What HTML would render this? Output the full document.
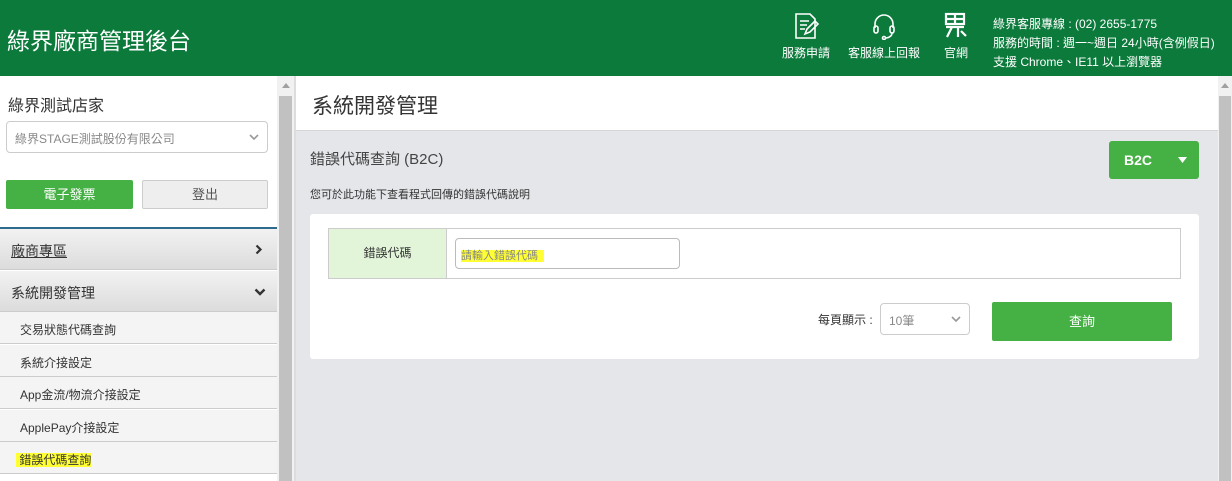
<!DOCTYPE html>
<html><head><meta charset="utf-8"><style>
*{box-sizing:border-box;margin:0;padding:0}
body{width:1232px;height:481px;overflow:hidden;background:#fff;font-family:"Liberation Sans","Noto Sans CJK TC",sans-serif;color:#333;position:relative}
.hd{position:absolute;left:0;top:0;width:1232px;height:76px;background:#0b7a3b;color:#fff}
.hd .t{position:absolute;left:7px;top:22px;font-size:23px}
.ic{position:absolute;top:12px;text-align:center;font-size:12px;width:80px}
.ic svg{display:block;margin:0 auto 4px}
.info{position:absolute;left:993px;top:15px;font-size:12px;line-height:19px}
.sb{position:absolute;left:0;top:76px;width:277px;height:405px;background:#fff}
.scr{position:absolute;top:76px;height:405px;width:17px;background:#f1f1f1}
.thumb{position:absolute;background:#c1c1c1}
.shop{position:absolute;left:8px;top:92px;font-size:16px}
.sel{position:absolute;left:6px;top:121px;width:262px;height:32px;border:1px solid #ccc;border-radius:4px;font-size:12px;color:#888;padding:8px 8px}
.chev{position:absolute}
.b1{position:absolute;left:6px;top:180px;width:127px;height:29px;background:#45b044;border-radius:2px;color:#fff;font-size:13px;text-align:center;line-height:29px}
.b2{position:absolute;left:142px;top:180px;width:126px;height:29px;background:#eee;border:1px solid #ccc;border-radius:2px;font-size:13px;text-align:center;line-height:27px;color:#555}
.line{position:absolute;left:0;top:227px;width:277px;height:2px;background:#2f6b8c}
.mh{position:absolute;left:0;width:277px;height:41px;background:linear-gradient(#f2f2f2,#dcdcdc);font-size:14px;padding:12px 11px;border-bottom:1px solid #ccc}
.si{position:absolute;left:0;width:277px;height:32px;background:#f4f4f4;border-bottom:1px solid #ccc;font-size:12px;padding:9px 20px}
.main{position:absolute;left:296px;top:76px;width:922px;height:405px;background:#e4e6e9}
.mt{position:absolute;left:0;top:0;width:922px;height:55px;background:#fff;border-bottom:1px solid #d5d5d5;font-size:21px;padding:14px 16px;color:#333}
.card{position:absolute;left:14px;top:138px;width:889px;height:145px;background:#fff;border-radius:3px}
hl{background:#ffff33}
</style></head><body>
<div class="hd"><div class="t">綠界廠商管理後台</div>
<div class="ic" style="left:766px"><svg width="26" height="28" viewBox="0 0 26 28" fill="none" stroke="#fff" stroke-width="1.6"><path d="M3 2h14l5 5v19H3z"/><path d="M7 9h9M7 13h7M7 17h5"/><path d="M12 22l2-5 8-8 3 3-8 8z"/></svg>服務申請</div>
<div class="ic" style="left:844px"><svg width="26" height="28" viewBox="0 0 26 28" fill="none" stroke="#fff" stroke-width="1.6"><path d="M4 16v-4a9 9 0 0118 0v4"/><rect x="3" y="14" width="4" height="7" rx="2"/><rect x="19" y="14" width="4" height="7" rx="2"/><path d="M21 21q0 4-6 5"/><circle cx="13" cy="26" r="1.5"/></svg>客服線上回報</div>
<div class="ic" style="left:916px"><svg width="26" height="28" viewBox="0 0 26 28" fill="none" stroke="#fff" stroke-width="2.2"><rect x="3" y="2" width="18" height="10"/><path d="M3 7h18M12 2v10M3 15h18M9 15l-5 10M15 15v10M18 19l5 5"/></svg>官網</div>
<div class="info">綠界客服專線 : (02) 2655-1775<br>服務的時間 : 週一~週日 24小時(含例假日)<br>支援 Chrome、IE11 以上瀏覽器</div>
</div>
<div class="sb"></div>
<div class="shop">綠界測試店家</div>
<div class="sel">綠界STAGE測試股份有限公司<svg class="chev" style="right:8px;top:12px" width="10" height="7" viewBox="0 0 10 7"><path d="M1 1l4 4 4-4" fill="none" stroke="#999" stroke-width="1.6"/></svg></div>
<div class="b1">電子發票</div><div class="b2">登出</div>
<div class="line"></div>
<div class="mh" style="top:229px"><u>廠商專區</u><svg class="chev" style="right:14px;top:15px" width="8" height="11" viewBox="0 0 8 11"><path d="M1.5 1.5l4 4-4 4" fill="none" stroke="#333" stroke-width="2.2"/></svg></div>
<div class="mh" style="top:271px">系統開發管理<svg class="chev" style="right:11px;top:17px" width="12" height="8" viewBox="0 0 12 8"><path d="M1.5 1.5l4.5 4.5 4.5-4.5" fill="none" stroke="#333" stroke-width="2.4"/></svg></div>
<div class="si" style="top:312px">交易狀態代碼查詢</div>
<div class="si" style="top:345px">系統介接設定</div>
<div class="si" style="top:377px">App金流/物流介接設定</div>
<div class="si" style="top:410px">ApplePay介接設定</div>
<div class="si" style="top:442px;padding-left:16px"><hl>&nbsp;錯誤代碼查詢</hl></div>
<div class="scr" style="left:277px"><div class="thumb" style="left:2px;top:20px;width:13px;height:385px"></div><svg style="position:absolute;left:5px;top:7px" width="8" height="5"><path d="M0 5L4 0 8 5z" fill="#a0a0a0"/></svg></div>
<div style="position:absolute;left:294px;top:76px;width:2px;height:405px;background:#ddd"></div>
<div class="main">
<div class="mt">系統開發管理</div>
<div style="position:absolute;left:14px;top:72px;font-size:15px;color:#444">錯誤代碼查詢 (B2C)</div>
<div style="position:absolute;left:14px;top:110px;font-size:11px">您可於此功能下查看程式回傳的錯誤代碼說明</div>
<div style="position:absolute;left:813px;top:65px;width:90px;height:38px;background:#45b044;border-radius:3px;color:#fff;font-size:14px;font-weight:bold;padding:11px 15px">B2C<svg style="position:absolute;right:12px;top:16px" width="9" height="6"><path d="M0 0h9L4.5 6z" fill="#fff"/></svg></div>
<div class="card">
<div style="position:absolute;left:18px;top:14px;width:853px;height:51px;border:1px solid #ccc"></div>
<div style="position:absolute;left:19px;top:15px;width:118px;height:49px;background:#e3f5d9;border-right:1px solid #ccc;font-size:12px;text-align:center;line-height:49px">錯誤代碼</div>
<div style="position:absolute;left:145px;top:24px;width:225px;height:31px;border:1px solid #bbb;border-radius:4px;font-size:11px;color:#888;padding:8px 5px"><hl>請輸入錯誤代碼&nbsp;&nbsp;</hl></div>
<div style="position:absolute;left:508px;top:97px;font-size:12px">每頁顯示 :</div>
<div style="position:absolute;left:570px;top:89px;width:90px;height:32px;border:1px solid #ccc;border-radius:4px;font-size:12px;color:#888;padding:8px 8px">10筆<svg class="chev" style="right:8px;top:12px" width="10" height="7" viewBox="0 0 10 7"><path d="M1 1l4 4 4-4" fill="none" stroke="#999" stroke-width="1.6"/></svg></div>
<div style="position:absolute;left:682px;top:88px;width:180px;height:39px;background:#45b044;border-radius:2px;color:#fff;font-size:13px;text-align:center;line-height:39px">查詢</div>
</div>
</div>
<div class="scr" style="left:1218px;width:14px;background:#f1f1f1"><div class="thumb" style="left:1px;top:20px;width:12px;height:385px"></div><svg style="position:absolute;left:3px;top:7px" width="8" height="5"><path d="M0 5L4 0 8 5z" fill="#a0a0a0"/></svg></div>
</body></html>
